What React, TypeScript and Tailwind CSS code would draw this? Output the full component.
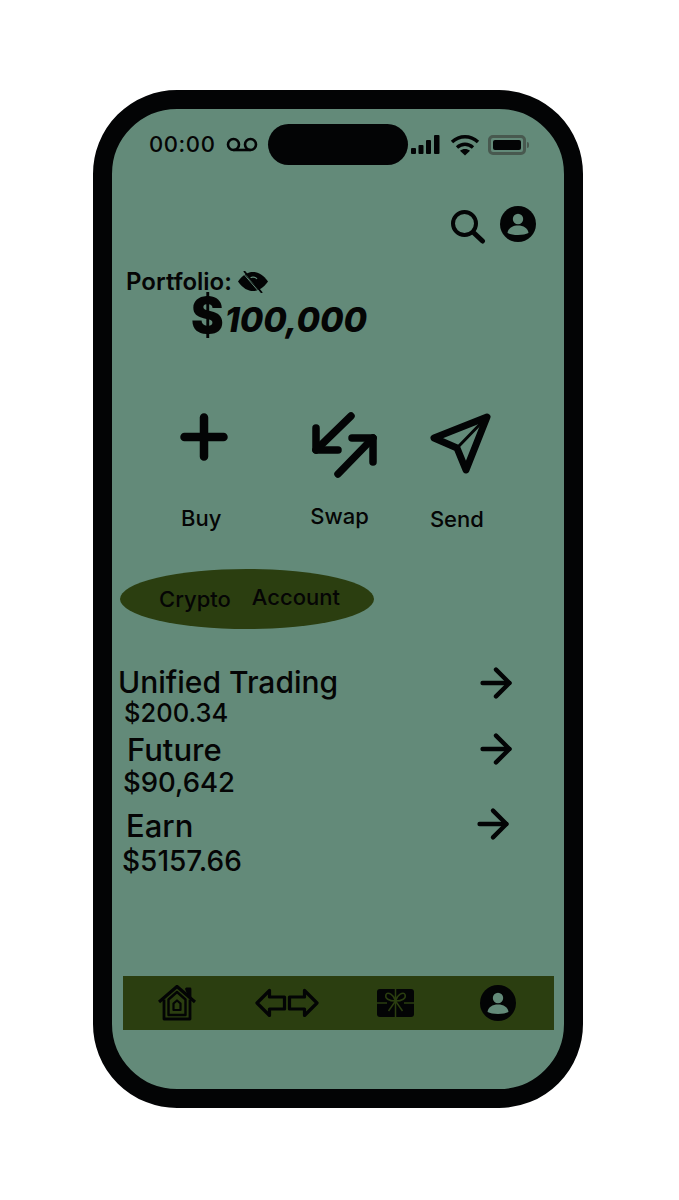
import { ArrowRight } from 'lucide-react';

function Avatar({ className }: { className: string }) {
  return (
    <svg viewBox="0 0 36 36" className={className}>
      <circle cx="18" cy="18" r="18" fill="#030405" />
      <circle cx="18" cy="13" r="5.2" fill="#638a79" />
      <path d="M7.500 27c.6-5 5-7.600 10.500-7.600S27.900 22 28.500 27c-2.500 1.300-6 2-10.500 2s-8-.7-10.500-2z" fill="#638a79" />
    </svg>
  );
}

function SearchIcon() {
  return (
    <svg viewBox="0 0 36 38" className="h-[38px] w-[36px]" fill="none" stroke="#030405" strokeLinecap="round">
      <circle cx="14.500" cy="17.500" r="11.500" strokeWidth="4" />
      <path d="M24 27l8.500 8" strokeWidth="5" />
    </svg>
  );
}

function Voicemail() {
  return (
    <svg viewBox="0 0 32 16" className="h-[16px] w-[32px]" fill="none" stroke="#030405" strokeWidth="2.600">
      <circle cx="7.500" cy="7.500" r="5.500" />
      <circle cx="24.500" cy="7.500" r="5.500" />
      <path d="M7.500 13h17" />
    </svg>
  );
}

function Signal() {
  return (
    <svg viewBox="0 0 29 20" className="h-[20px] w-[29px]" fill="#030405">
      <rect x="0" y="13" width="5" height="6" rx="1" />
      <rect x="7.500" y="10" width="5" height="9" rx="1" />
      <rect x="15" y="5" width="5" height="14" rx="1" />
      <rect x="23" y="0" width="5.500" height="19" rx="1" />
    </svg>
  );
}

function Wifi() {
  return (
    <svg viewBox="0 0 30 22" className="h-[22px] w-[30px]" fill="none" stroke="#030405" strokeWidth="3.400">
      <path d="M2 8c7.500-7 18.500-7 26 0" />
      <path d="M7 13.500c4.800-4.300 11.200-4.300 16 0" />
      <path d="M15 21.500l-5-4.800c2.900-2.300 7.100-2.300 10 0z" fill="#030405" stroke="none" />
    </svg>
  );
}

function Battery() {
  return (
    <div className="flex items-center">
      <div className="flex h-[20px] w-[38px] items-center rounded-[5px] border-[3px] border-[#48594f] px-[2px]">
        <div className="h-[10px] w-[28px] rounded-[2px] bg-[#030405]" />
      </div>
      <div className="ml-[1px] h-[6px] w-[2px] rounded-r-full bg-[#48594f]" />
    </div>
  );
}

function EyeOff() {
  return (
    <svg viewBox="0 0 30 22" className="h-[22px] w-[30px]">
      <path d="M0 10.500C5 3.500 10 1 15 1s10 2.500 15 9.500C25 17.500 20 20 15 20S5 17.500 0 10.500z" fill="#030405" />
      <path d="M8.500 4.500l15 17" stroke="#638a79" strokeWidth="1" />
      <path d="M11 8c1-2 6-3 8 0" fill="none" stroke="#638a79" strokeWidth="1.200" />
      <path d="M6 0l18 22" stroke="#030405" strokeWidth="1.800" />
      <path d="M4 1l18 21" stroke="#638a79" strokeWidth="1" />
    </svg>
  );
}

function Plus() {
  return (
    <svg viewBox="0 0 48 48" className="h-[48px] w-[48px]" fill="none" stroke="#030405" strokeWidth="8.500" strokeLinecap="round">
      <path d="M24 4.500v39M4.500 24h39" />
    </svg>
  );
}

function Swap() {
  return (
    <svg viewBox="0 0 66 66" className="h-[66px] w-[66px]" fill="none" stroke="#030405" strokeWidth="7.500" strokeLinecap="round" strokeLinejoin="round">
      <path d="M40 4L5 38" />
      <path d="M5 16v22h22" />
      <path d="M27 62l35-36" />
      <path d="M41 26h21v24" />
    </svg>
  );
}

function Send() {
  return (
    <svg viewBox="0 0 62 62" className="h-[62px] w-[62px]" fill="none" stroke="#030405" strokeWidth="7" strokeLinecap="round" strokeLinejoin="round">
      <path d="M57 5L4 26l23 10 9 22z" />
      <path d="M57 5L27 36" strokeWidth="3" />
    </svg>
  );
}

function Home() {
  return (
    <svg viewBox="0 0 38 36" className="h-[36px] w-[38px]" fill="none" stroke="#030405" strokeWidth="2.800" strokeLinejoin="round">
      <path d="M1 17L19 1.500 37 17" strokeWidth="3.200" />
      <path d="M28.500 4h3.500v8z" fill="#030405" />
      <path d="M6 14.500V34h26V14.500" />
      <path d="M10.500 14.500L19 7l8.500 7.500V30h-17z" strokeWidth="2.400" />
      <path d="M15.500 18.500L19 15.500l3.500 3V25h-7z" strokeWidth="2.200" />
    </svg>
  );
}

function TradeArrows() {
  return (
    <svg viewBox="0 0 64 30" className="h-[30px] w-[64px]" fill="none" stroke="#030405" strokeWidth="3.200" strokeLinejoin="round">
      <path d="M2 15L14.500 2.500V9H29.500V21H14.500V27.500z" />
      <path d="M62 15L49.500 2.500V9H34.500V21H49.500V27.500z" />
    </svg>
  );
}

function Gift() {
  return (
    <svg viewBox="0 0 37 28" className="h-[28px] w-[37px]">
      <rect width="37" height="28" rx="3" fill="#030405" />
      <g fill="none" stroke="#2b3e10" strokeWidth="1.500">
        <path d="M18.500 0v28M0 14h10M27 14h10" />
        <path d="M18.500 12C12 12 7.500 9.500 9 5.500c1.500-3.500 8 .5 9.500 6.500 1.500-6 8-10 9.500-6.500 1.500 4-3 6.500-9.500 6.500z" />
        <path d="M18.500 12l-7 10M18.500 12l7 10" />
      </g>
    </svg>
  );
}

const accounts = [
  {
    name: 'Unified Trading',
    amount: '$200.34',
    rowClass: 'pr-[45px]',
    nameClass: 'ml-[6px] text-[30px]',
    amountClass: 'ml-[12px] -mt-[4px] text-[25.5px]',
    arrowClass: '-mt-[2px]',
  },
  {
    name: 'Future',
    amount: '$90,642',
    rowClass: 'pr-[45px] mt-[2px]',
    nameClass: 'ml-[15px] text-[31px]',
    amountClass: 'ml-[11px] -mt-[3px] text-[27.5px]',
    arrowClass: '-mt-[4px]',
  },
  {
    name: 'Earn',
    amount: '$5157.66',
    rowClass: 'pr-[48px] mt-[9px]',
    nameClass: 'ml-[14px] text-[31px]',
    amountClass: 'ml-[10px] text-[28px]',
    arrowClass: '-mt-[5px]',
  },
];

export default function App() {
  return (
    <div className="h-[1200px] bg-white pt-[90px] pl-[93px] font-['Inter',sans-serif] text-[#050505]">
      <div className="h-[1018px] w-[490px] rounded-[84px] border-[19px] border-[#030405] bg-[#638a79]">
        {/* status bar */}
        <div className="flex items-center pt-[15px] pl-[37px]">
          <span className="w-[65px] text-[22px] leading-[41px] font-medium tracking-[0.6px]">00:00</span>
          <div className="ml-[12px]"><Voicemail /></div>
          <div className="ml-[10px] h-[41px] w-[140px] rounded-full bg-[#030405]" />
          <div className="ml-[3px]"><Signal /></div>
          <div className="ml-[10px]"><Wifi /></div>
          <div className="ml-[8px]"><Battery /></div>
        </div>

        <div className="mt-[41px] flex items-start justify-end pr-[28px]">
          <SearchIcon />
          <Avatar className="ml-[14px] h-[36px] w-[36px]" />
        </div>

        {/* balance */}
        <div className="mt-[24px] flex items-center pl-[14px]">
          <span className="text-[24px] leading-[28px] font-semibold">Portfolio:</span>
          <div className="ml-[6px]"><EyeOff /></div>
        </div>
        <div className="ml-[79px] flex h-[47px] items-start">
          <span className="text-[49px] leading-[40px] font-black">$</span>
          <span className="mt-[4px] ml-[1px] text-[34px] leading-[40px] font-extrabold italic">100,000</span>
        </div>

        {/* quick actions */}
        <div className="mt-[69px] flex h-[66px] items-start">
          <div className="mt-[1px] ml-[68px]"><Plus /></div>
          <div className="ml-[83px]"><Swap /></div>
          <div className="ml-[53px]"><Send /></div>
        </div>
        <div className="mt-[27px] flex items-start text-[22px] leading-[26px] font-[550]">
          <span className="ml-[69px]">Buy</span>
          <span className="-mt-[2px] ml-[89px]">Swap</span>
          <span className="mt-[1px] ml-[61px]">Send</span>
        </div>

        <div className="mt-[37px] ml-[8px] flex h-[60px] w-[254px] items-center rounded-[50%] bg-[#2b3e10] pl-[39px] text-[22px] font-[550]">
          <span className="mt-[1px]">Crypto</span>
          <span className="-mt-[3px] ml-[21px]">Account</span>
        </div>

        {/* wallets */}
        <div className="mt-[33px]">
          {accounts.map((account) => (
            <div key={account.name} className={`flex items-start justify-between ${account.rowClass}`}>
              <div className="font-[550] whitespace-nowrap">
                <div className={`leading-[40px] ${account.nameClass}`}>{account.name}</div>
                <div className={`leading-[30px] ${account.amountClass}`}>{account.amount}</div>
              </div>
              <ArrowRight size={46} color="#030405" strokeWidth={2.300} className={account.arrowClass} />
            </div>
          ))}
        </div>

        <div className="mt-[100px] ml-[11px] flex h-[54px] w-[431px] items-center bg-[#2b3e10]">
          <div className="ml-[35px]"><Home /></div>
          <div className="ml-[59px]"><TradeArrows /></div>
          <div className="ml-[58px]"><Gift /></div>
          <Avatar className="ml-[66px] h-[36px] w-[36px]" />
        </div>
      </div>
    </div>
  );
}
